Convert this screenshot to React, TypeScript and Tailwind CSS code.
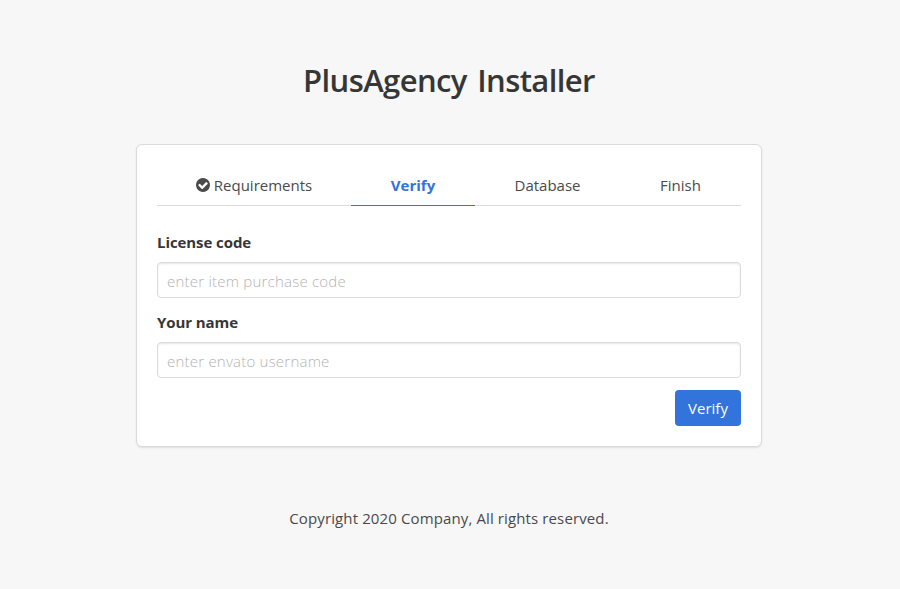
import React from "react";

const steps = [
  { label: "Requirements", done: true, cell: "w-[194px]" },
  { label: "Verify", active: true, cell: "w-[124px]" },
  { label: "Database", cell: "w-[145px]" },
  { label: "Finish", cell: "w-[121px]" },
];

function Field({ label, placeholder }: { label: string; placeholder: string }) {
  return (
    <div className="mb-3">
      <label className="mb-2 block h-6 leading-6 font-bold tracking-[-0.08px] text-[#363636]">{label}</label>
      <input
        className="block h-9 w-full rounded border border-[#dbdbdb] bg-white px-[9px] pt-0.5 font-light tracking-[0.22px] text-[#363636] shadow-[inset_0_1px_2px_rgba(10,10,10,0.1)] outline-none placeholder:text-[#b3b3b3]"
        placeholder={placeholder}
      />
    </div>
  );
}

export default function App() {
  return (
    <div className="flex h-[589px] w-[900px] flex-col bg-[#f7f7f7] pr-0.5 font-['Open_Sans',sans-serif] text-[15px] text-[#4a4a4a]">
      <h1 className="mt-[60px] h-10 text-center text-[31px] leading-10 font-semibold tracking-[-0.6px] text-[#363636] [word-spacing:3px]">
        PlusAgency Installer
      </h1>
      <main className="mx-auto mt-11 h-[303px] w-[626px] rounded-md border border-[#dbdbdb] bg-white px-5 pt-5 shadow-[0_1px_2px_rgba(10,10,10,0.1)]">
        <ul className="flex h-[41px]">
          {steps.map((s) => (
            <li
              key={s.label}
              className={`flex items-center justify-center gap-1 border-b leading-6 ${s.cell} ${
                s.active ? "border-[#3273dc] font-bold text-[#3273dc]" : "border-[#dbdbdb]"
              }`}
            >
              {s.done && (
                <svg className="size-[14px]" viewBox="0 0 1536 1536" fill="currentColor">
                  <path d="M1284 606q0-28-18-46l-91-90q-19-19-45-19t-45 19L677 877 451 651q-19-19-45-19t-45 19l-91 90q-18 18-18 46 0 27 18 45l362 362q19 19 45 19 27 0 46-19l543-543q18-18 18-45zm252 162q0 209-103 385.500T1153.500 1433 768 1536t-385.500-103T103 1153.500 0 768t103-385.500T382.500 103 768 0t385.500 103T1433 382.500 1536 768z" />
                </svg>
              )}
              {s.label}
            </li>
          ))}
        </ul>
        <form className="pt-6">
          <Field label="License code" placeholder="enter item purchase code" />
          <Field label="Your name" placeholder="enter envato username" />
          <div className="flex justify-end">
            <button type="button" className="h-9 w-[66px] rounded bg-[#3273dc] text-white">
              Verify
            </button>
          </div>
        </form>
      </main>
      <footer className="mt-[59px] text-center leading-6 tracking-[0.12px]">Copyright 2020 Company, All rights reserved.</footer>
    </div>
  );
}
